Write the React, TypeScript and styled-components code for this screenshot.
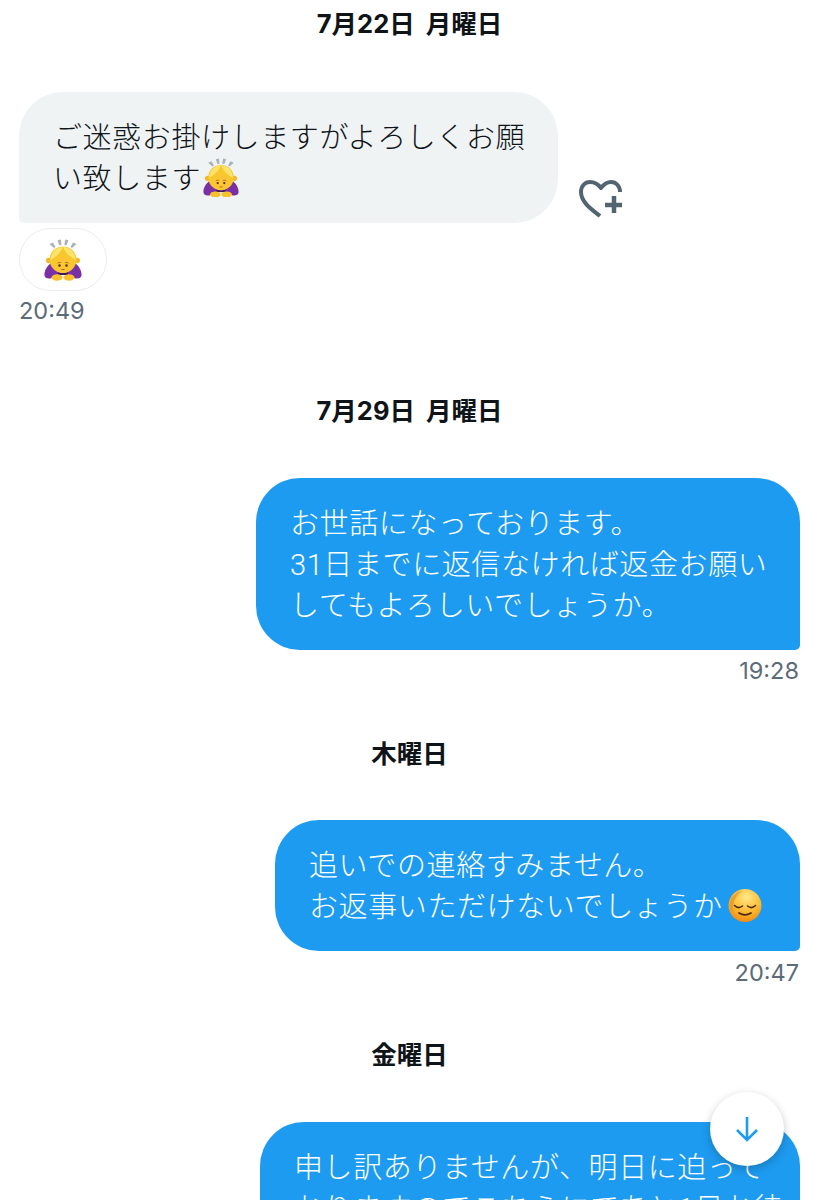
import React from "react";
import styled, { createGlobalStyle } from "styled-components";

const GlobalStyle = createGlobalStyle`
  html, body {
    margin: 0;
    padding: 0;
    background: #ffffff;
  }
  body {
    font-family: "Noto Sans CJK JP", "Noto Sans", sans-serif;
  }
`;

const Page = styled.div`
  width: 819px;
  height: 1200px;
  position: relative;
  overflow: hidden;
  background: #fff;
  padding: 8px 19px 0;
  box-sizing: border-box;
`;

const DayLabel = styled.div<{ $gap: number }>`
  text-align: center;
  font-family: "Inter", "Noto Sans CJK JP", sans-serif;
  font-size: 25.5px;
  line-height: 32px;
  font-weight: 700;
  word-spacing: 5px;
  color: #0f1419;
  margin-bottom: ${(p) => p.$gap}px;
`;

const Row = styled.div<{ $mine?: boolean }>`
  display: flex;
  justify-content: ${(p) => (p.$mine ? "flex-end" : "flex-start")};
  align-items: flex-end;
  gap: 21px;
`;

const Bubble = styled.div<{ $mine?: boolean; $width: number }>`
  width: ${(p) => p.$width}px;
  box-sizing: border-box;
  padding: 26px 30px 23px 34px;
  font-family: "Roboto", "Noto Sans CJK JP", sans-serif;
  font-size: 29px;
  line-height: 41px;
  font-weight: 300;
  letter-spacing: 0.6px;
  color: ${(p) => (p.$mine ? "#ffffff" : "#0f1419")};
  background: ${(p) => (p.$mine ? "#1d9bf0" : "#eff3f4")};
  border-radius: ${(p) => (p.$mine ? "44px 44px 5px 44px" : "44px 44px 44px 5px")};
`;

const Line = styled.div`
  white-space: nowrap;
  display: flex;
  align-items: center;
  height: 41px;
`;

const HeartButton = styled.div`
  width: 44px;
  height: 40px;
  margin-bottom: 3px;
  color: #536471;
`;

const Reaction = styled.div`
  width: 88px;
  height: 63px;
  margin-top: 5px;
  box-sizing: border-box;
  border: 1.5px solid #e8edf0;
  border-radius: 32px;
  display: flex;
  align-items: center;
  justify-content: center;
`;

const Time = styled.div<{ $mine?: boolean; $top?: number; $gap: number }>`
  font-family: "Inter", "Liberation Sans", sans-serif;
  font-size: 23.5px;
  line-height: 28px;
  color: #5b6b78;
  margin-top: ${(p) => p.$top ?? 6}px;
  padding-right: ${(p) => (p.$mine ? 1 : 0)}px;
  text-align: ${(p) => (p.$mine ? "right" : "left")};
  margin-bottom: ${(p) => p.$gap}px;
`;

const ScrollButton = styled.div`
  position: absolute;
  left: 710px;
  top: 1092px;
  width: 74px;
  height: 74px;
  border-radius: 50%;
  background: #fff;
  box-shadow: 0 3px 8px rgba(20, 23, 26, 0.25);
  display: flex;
  align-items: center;
  justify-content: center;
  color: #1d9bf0;
`;

const EmojiSvg = styled.svg<{ $gap?: number; $lift?: number }>`
  flex: none;
  margin-left: ${(p) => p.$gap ?? 0}px;
  margin-top: ${(p) => -(p.$lift ?? 0)}px;
`;

const BowEmoji: React.FC<{ width: number; gap?: number; lift?: number }> = ({ width, gap, lift }) => (
  <EmojiSvg $gap={gap} $lift={lift} width={width} height={(width * 42) / 38} viewBox="0 0 38 42">
    <g fill="#a9b2ba">
      <path d="M5.500 5l3.500-1.500 2.500 4.500-1.500 1z" />
      <path d="M13.500 1.200l3.300-.6.700 5.400-2.200.3z" />
      <path d="M21.200.6l3.300.6-2 5.100-2.200-.3z" />
      <path d="M29 3.500l3.500 1.500-4.500 4-1.500-1z" />
    </g>
    <path d="M7 24C3 27 0 32 .5 36.500c.3 2.800 4 3.800 7.500 2.500l7-4-1-11z" fill="#7b2fa6" />
    <path d="M31 24c4 3 7 8 6.500 12.500-.3 2.800-4 3.800-7.500 2.500l-7-4 1-11z" fill="#7b2fa6" />
    <path d="M14 31h10v5H14z" fill="#3f1a5c" />
    <circle cx="4.800" cy="21.500" r="2.800" fill="#f2b632" />
    <circle cx="33.200" cy="21.500" r="2.800" fill="#f2b632" />
    <path d="M19 7.500C11.500 7.500 5.500 13 5.500 20.500 5.500 28 11.500 34 19 34s13.500-6 13.500-13.500C32.500 13 26.500 7.500 19 7.500z" fill="#f7c72c" />
    <path d="M18.800 8C12 8.300 6.500 13.500 6.500 21c3.500-2 10-6 12.300-13z" fill="#fee36b" />
    <path d="M19.200 8C26 8.300 31.500 13.500 31.500 21c-3.500-2-10-6-12.300-13z" fill="#fee36b" />
    <ellipse cx="19" cy="26" rx="8.500" ry="8" fill="#fdc436" />
    <path d="M13.500 24.200c1.300-1 2.700-1 3.500-.3M24.500 24.200c-1.300-1-2.700-1-3.500-.3" stroke="#7a4a12" strokeWidth=".7" fill="none" />
    <circle cx="15.500" cy="26.500" r="1.200" fill="#4d3210" />
    <circle cx="22.500" cy="26.500" r="1.200" fill="#4d3210" />
    <path d="M17.300 30.500h3.400" stroke="#a9641c" strokeWidth=".9" />
    <ellipse cx="13" cy="38.500" rx="5.500" ry="3.200" fill="#f9c02c" />
    <ellipse cx="25" cy="38.500" rx="5.500" ry="3.200" fill="#f9c02c" />
  </EmojiSvg>
);

const PensiveEmoji: React.FC = () => (
  <EmojiSvg $gap={5} $lift={4} width="34" height="35" viewBox="0 0 34 35">
    <defs>
      <radialGradient id="face" cx="0.55" cy="0.25" r="0.8">
        <stop offset="0" stopColor="#ffe98a" />
        <stop offset="0.55" stopColor="#fdbb33" />
        <stop offset="1" stopColor="#ee8410" />
      </radialGradient>
    </defs>
    <circle cx="17" cy="17.500" r="16.500" fill="url(#face)" />
    <path d="M2.500 12C5 6 10 3 15 3 9 6 5 12 4 25c-1.500-4-2-8-1.500-13z" fill="#d88a2a" opacity=".55" />
    <path d="M6.500 17.500c2.500 2.500 5.500 2.500 8 .5M19.500 18c2.500 2 5.500 2 8-.5" fill="none" stroke="#4a2a10" strokeWidth="1.600" strokeLinecap="round" />
    <path d="M11 25c4 2.500 8 2.500 12 0" fill="none" stroke="#4a2a10" strokeWidth="1.700" strokeLinecap="round" />
  </EmojiSvg>
);

export default function App() {
  return (
    <Page>
      <GlobalStyle />
      <DayLabel $gap={52}>7月22日 月曜日</DayLabel>
      <Row>
        <Bubble $width={539}>
          <Line>ご迷惑お掛けしますがよろしくお願</Line>
          <Line>
            い致します
            <BowEmoji width={36} gap={2} lift={4} />
          </Line>
        </Bubble>
        <HeartButton>
          <svg width="44" height="40" viewBox="0 0 44 40" fill="none" stroke="currentColor">
            <path
              d="M21 36 C12 29 2 22 2 12 C2 6 6 2 11 2 C15 2 19 4 22 8 C25 4 28 2 32 2 C37 2 41 6 41 12"
              strokeWidth="4"
              strokeLinejoin="round"
            />
            <path d="M35 16v17M26 25h17" strokeWidth="4.500" />
          </svg>
        </HeartButton>
      </Row>
      <Reaction>
        <BowEmoji width={38} />
      </Reaction>
      <Time $gap={70}>20:49</Time>
      <DayLabel $gap={51}>7月29日 月曜日</DayLabel>
      <Row $mine>
        <Bubble $mine $width={544}>
          <Line>お世話になっております。</Line>
          <Line>31日までに返信なければ返金お願い</Line>
          <Line>してもよろしいでしょうか。</Line>
        </Bubble>
      </Row>
      <Time $mine $top={7} $gap={53}>19:28</Time>
      <DayLabel $gap={50}>木曜日</DayLabel>
      <Row $mine>
        <Bubble $mine $width={525}>
          <Line>追いでの連絡すみません。</Line>
          <Line>
            お返事いただけないでしょうか
            <PensiveEmoji />
          </Line>
        </Bubble>
      </Row>
      <Time $mine $top={8} $gap={52}>20:47</Time>
      <DayLabel $gap={51}>金曜日</DayLabel>
      <Row $mine>
        <Bubble $mine $width={540}>
          <Line>申し訳ありませんが、明日に迫って</Line>
          <Line>おりますのでこちらにてあと1日お待</Line>
        </Bubble>
      </Row>
      <ScrollButton>
        <svg width="26" height="28" viewBox="0 0 26 28" fill="none" stroke="currentColor" strokeWidth="2.600">
          <path d="M13 2v23M3 15l10 10 10-10" />
        </svg>
      </ScrollButton>
    </Page>
  );
}
